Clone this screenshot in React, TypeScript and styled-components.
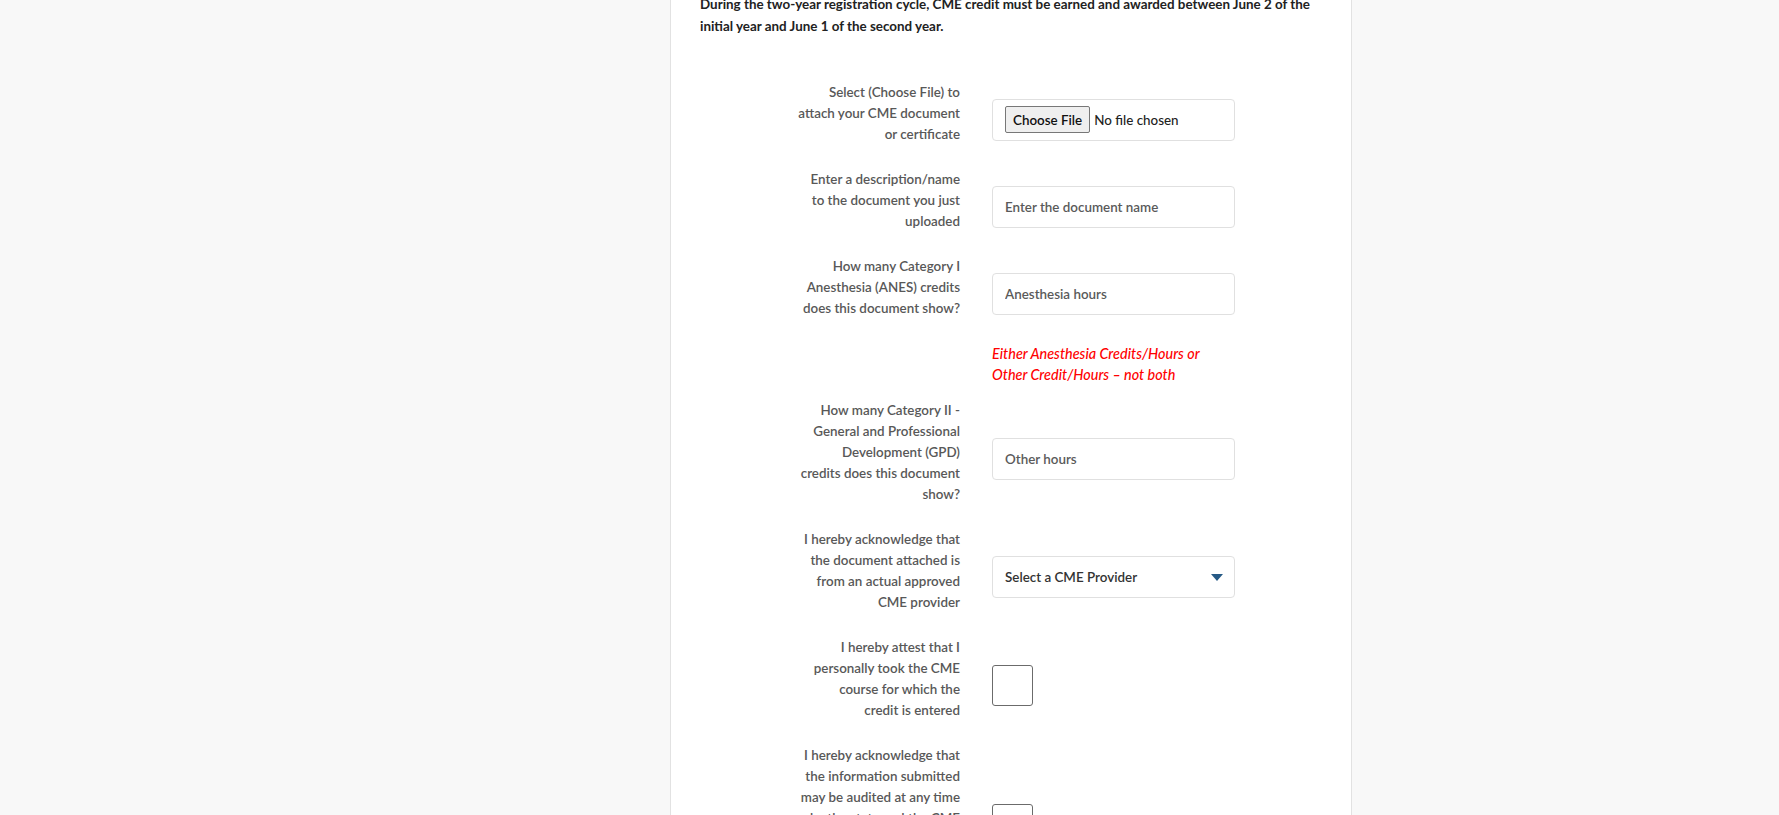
import React from 'react';
import styled, { createGlobalStyle } from 'styled-components';

const GlobalStyle = createGlobalStyle`
  html, body {
    margin: 0;
    padding: 0;
    background: #f8f8f8;
  }
  body {
    font-family: Lato, "Open Sans", sans-serif;
    overflow: hidden;
  }
`;

const Page = styled.div`
  display: grid;
  grid-template-columns: 670px 682px 1fr;
  min-height: 100vh;
`;

const Card = styled.main`
  grid-column: 2;
  background: #fff;
  border-left: 1px solid #e2e2e2;
  border-right: 1px solid #e2e2e2;
  padding: 0 29px;
`;

const Intro = styled.p`
  margin: -6px 0 0;
  font-size: 13.4px;
  font-weight: 700;
  line-height: 21.5px;
  color: #222;
`;

const Form = styled.form`
  margin-top: 45px;
  display: flex;
  flex-direction: column;
  gap: 12px;
`;

const Row = styled.div`
  display: grid;
  grid-template-columns: 260px 243px;
  column-gap: 32px;
  align-items: center;
`;

const Label = styled.label`
  margin-bottom: 12px;
  text-align: right;
  white-space: nowrap;
  font-size: 13.4px;
  font-weight: 600;
  line-height: 21px;
  color: #585858;
`;

const Field = styled.div`
  box-sizing: border-box;
  height: 42px;
  display: flex;
  align-items: center;
  justify-content: space-between;
  padding: 0 11px 0 12px;
  border: 1px solid #e0e0e0;
  border-radius: 4px;
  background: #fff;
`;

const TextInput = styled.input`
  box-sizing: border-box;
  width: 100%;
  height: 42px;
  padding: 0 12px;
  border: 1px solid #e0e0e0;
  border-radius: 4px;
  font-family: inherit;
  font-size: 13.4px;
  font-weight: 600;
  color: #333;
  outline: none;
  &::placeholder {
    color: #5a5a5a;
    opacity: 1;
  }
`;

const FileButton = styled.button`
  height: 27px;
  padding: 0 7px;
  border: 1px solid #777;
  border-radius: 2px;
  background: #efefef;
  font-family: inherit;
  font-size: 13.4px;
  font-weight: 600;
  color: #111;
`;

const FileName = styled.span`
  flex: 1;
  margin-left: 4px;
  font-size: 13.4px;
  font-weight: 500;
  color: #222;
`;

const SelectText = styled.span`
  font-size: 13.4px;
  font-weight: 600;
  color: #333;
`;

const Checkbox = styled.span`
  box-sizing: border-box;
  display: block;
  width: 41px;
  height: 41px;
  border: 1px solid #6b6b6b;
  border-radius: 3px;
  background: #fff;
`;

const Note = styled.p`
  grid-column: 2;
  margin: 0;
  padding: 1px 0 3px;
  font-size: 14.4px;
  font-style: italic;
  font-weight: 500;
  line-height: 20.5px;
  color: #ff0000;
  white-space: nowrap;
`;

const lines = (text: string[]) =>
  text.map((t, i) => (
    <React.Fragment key={i}>
      {i > 0 && <br />}
      {t}
    </React.Fragment>
  ));

const Arrow = () => (
  <svg width="12" height="7" viewBox="0 0 12 7">
    <path d="M0 0h12L6 7z" fill="#265a86" />
  </svg>
);

export default function App() {
  return (
    <>
      <GlobalStyle />
      <Page>
        <Card>
          <Intro>
            During the two-year registration cycle, CME credit must be earned and awarded between June 2 of the
            <br />
            initial year and June 1 of the second year.
          </Intro>
          <Form>
            <Row>
              <Label>{lines(['Select (Choose File) to', 'attach your CME document', 'or certificate'])}</Label>
              <Field>
                <FileButton type="button">Choose File</FileButton>
                <FileName>No file chosen</FileName>
              </Field>
            </Row>
            <Row>
              <Label>{lines(['Enter a description/name', 'to the document you just', 'uploaded'])}</Label>
              <TextInput placeholder="Enter the document name" />
            </Row>
            <Row>
              <Label>{lines(['How many Category I', 'Anesthesia (ANES) credits', 'does this document show?'])}</Label>
              <TextInput placeholder="Anesthesia hours" />
            </Row>
            <Row>
              <Note>
                Either Anesthesia Credits/Hours or
                <br />
                Other Credit/Hours – not both
              </Note>
            </Row>
            <Row>
              <Label>
                {lines([
                  'How many Category II -',
                  'General and Professional',
                  'Development (GPD)',
                  'credits does this document',
                  'show?',
                ])}
              </Label>
              <TextInput placeholder="Other hours" />
            </Row>
            <Row>
              <Label>
                {lines([
                  'I hereby acknowledge that',
                  'the document attached is',
                  'from an actual approved',
                  'CME provider',
                ])}
              </Label>
              <Field>
                <SelectText>Select a CME Provider</SelectText>
                <Arrow />
              </Field>
            </Row>
            <Row>
              <Label>
                {lines(['I hereby attest that I', 'personally took the CME', 'course for which the', 'credit is entered'])}
              </Label>
              <Checkbox />
            </Row>
            <Row>
              <Label>
                {lines([
                  'I hereby acknowledge that',
                  'the information submitted',
                  'may be audited at any time',
                  'by the state and the CME',
                  'provider, and that false',
                  'entries may result in',
                  'disciplinary action',
                ])}
              </Label>
              <Checkbox />
            </Row>
          </Form>
        </Card>
      </Page>
    </>
  );
}
